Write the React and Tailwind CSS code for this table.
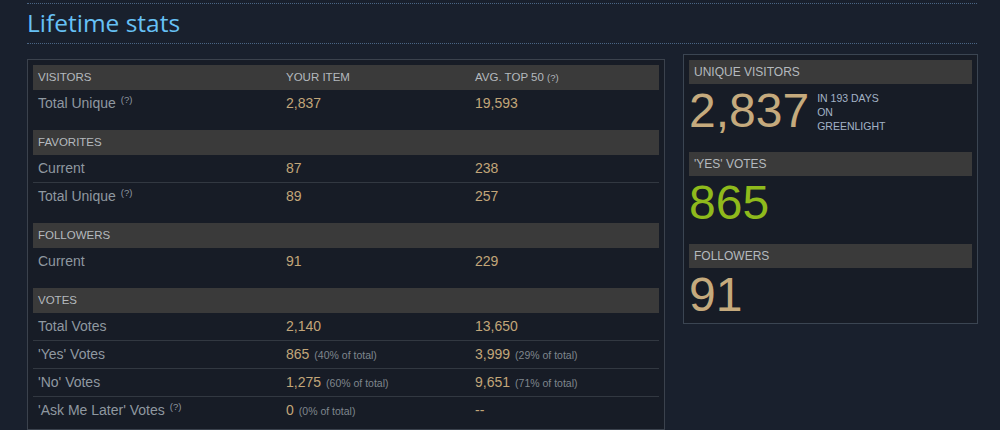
import React from 'react';

const sections = [
  {
    title: 'VISITORS',
    head: true,
    rows: [{ label: 'Total Unique', help: true, mine: '2,837', avg: '19,593' }],
  },
  {
    title: 'FAVORITES',
    rows: [
      { label: 'Current', mine: '87', avg: '238' },
      { label: 'Total Unique', help: true, mine: '89', avg: '257' },
    ],
  },
  {
    title: 'FOLLOWERS',
    rows: [{ label: 'Current', mine: '91', avg: '229' }],
  },
  {
    title: 'VOTES',
    rows: [
      { label: 'Total Votes', mine: '2,140', avg: '13,650' },
      { label: "'Yes' Votes", mine: '865', mineSub: '(40% of total)', avg: '3,999', avgSub: '(29% of total)' },
      { label: "'No' Votes", mine: '1,275', mineSub: '(60% of total)', avg: '9,651', avgSub: '(71% of total)' },
      { label: "'Ask Me Later' Votes", help: true, mine: '0', mineSub: '(0% of total)', avg: '--' },
    ],
  },
];

const Help = () => (
  <span className="ml-[5px] text-[9.5px] text-[#8f98a0] relative top-[-5px]">(?)</span>
);

const Value = ({ v, sub }) => (
  <span className="text-[#c2a679]">
    {v}
    {sub && <span className="ml-[5px] text-[10.5px] text-[#7f868d]">{sub}</span>}
  </span>
);

const Header = ({ title, head }) => (
  <div className="grid grid-cols-[248px_189px_1fr] h-[25px] items-center bg-[#3a3a3a] px-[5px] text-[11.5px] text-[#b4b9be]">
    <span>{title}</span>
    <span>{head ? 'YOUR ITEM' : ''}</span>
    <span>
      {head ? (
        <>
          AVG. TOP 50 <span className="text-[9.5px]">(?)</span>
        </>
      ) : (
        ''
      )}
    </span>
  </div>
);

const StatBlock = ({ title, children, last }) => (
  <div>
    <div className="h-[24px] flex items-center bg-[#3a3a3a] px-[5px] text-[12px] text-[#b4b9be]">{title}</div>
    <div className={last ? 'mt-[3px]' : 'mt-[3px] mb-[17px]'}>{children}</div>
  </div>
);

export default function App() {
  return (
    <div
      className="min-h-[430px] bg-[#19202d] pl-[27px] pt-[3px]"
      style={{ fontFamily: '"Liberation Sans", Arial, sans-serif' }}
    >
      <div className="w-[950px] border-y border-dotted border-[#4a6584] h-[41px] flex items-center">
        <h2
          className="text-[24.5px] text-[#67c1f5] leading-none"
          style={{ fontFamily: '"Open Sans", "Noto Sans", sans-serif' }}
        >
          Lifetime stats
        </h2>
      </div>

      <div className="flex items-start gap-[18px] mt-[10px]">
        {/* stats table */}
        <div className="w-[638px] mt-[5px] border border-[#3b424d] bg-[#171c26] p-[5px]">
          {sections.map((s, i) => (
            <div key={s.title} className={i < sections.length - 1 ? 'mb-[13px]' : ''}>
              <Header title={s.title} head={s.head} />
              {s.rows.map((r, j) => (
                <div
                  key={j}
                  className={
                    'grid grid-cols-[248px_189px_1fr] items-center px-[5px] text-[14px] ' +
                    (j < s.rows.length - 1 ? 'h-[28px] border-b border-[#323841]' : 'h-[27px]')
                  }
                >
                  <span className="text-[#8f98a0]">
                    {r.label}
                    {r.help && <Help />}
                  </span>
                  <Value v={r.mine} sub={r.mineSub} />
                  <Value v={r.avg} sub={r.avgSub} />
                </div>
              ))}
            </div>
          ))}
        </div>

        {/* summary box */}
        <div className="w-[295px] border border-[#3b4552] bg-[#171c26] px-[5px] pt-[5px] pb-[4px]">
          <StatBlock title="UNIQUE VISITORS">
            <div className="flex items-start">
              <span className="text-[48px] leading-none text-[#c5aa7d]">2,837</span>
              <div className="ml-[8px] mt-[4px] text-[10.5px] leading-[14px] text-[#a3b3c6]">
                <div>IN 193 DAYS</div>
                <div>ON</div>
                <div>GREENLIGHT</div>
              </div>
            </div>
          </StatBlock>
          <StatBlock title="'YES' VOTES">
            <span className="block text-[48px] leading-none text-[#8fba1c]">865</span>
          </StatBlock>
          <StatBlock title="FOLLOWERS" last>
            <span className="block text-[48px] leading-none text-[#c5aa7d]">91</span>
          </StatBlock>
        </div>
      </div>
    </div>
  );
}
